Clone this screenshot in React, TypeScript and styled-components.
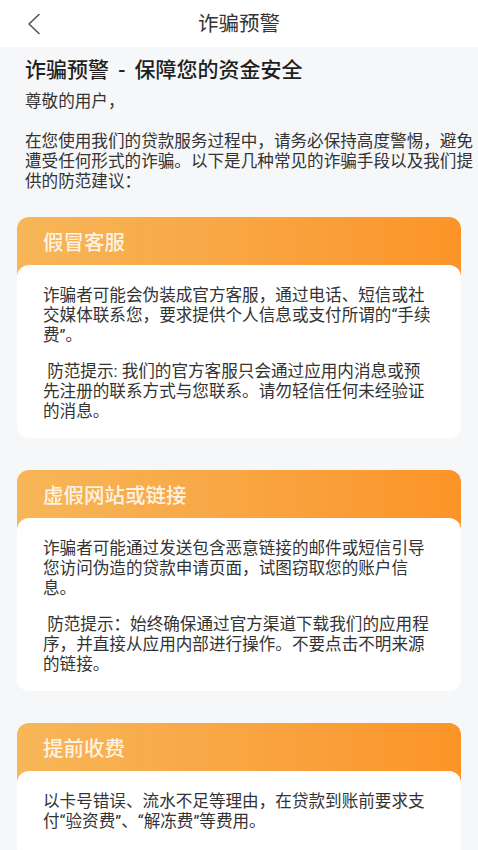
import styled, { createGlobalStyle } from 'styled-components';

const GlobalStyle = createGlobalStyle`
  * {
    box-sizing: border-box;
  }

  body {
    margin: 0;
    background: #f6f7f9;
    font-family: Roboto, 'Noto Sans CJK SC', sans-serif;
    color: #333;
  }
`;

const Page = styled.div`
  min-height: 100vh;
  background: #f6f7f9;
`;

const NavBar = styled.header`
  position: relative;
  height: 47px;
  display: flex;
  align-items: center;
  justify-content: center;
  background: #fff;
`;

const BackButton = styled.button`
  position: absolute;
  left: 20px;
  top: 9px;
  width: 28px;
  height: 30px;
  display: flex;
  align-items: center;
  justify-content: center;
  padding: 0;
  border: none;
  background: none;
  cursor: pointer;
`;

const NavTitle = styled.h1`
  margin: 0;
  font-size: 20.5px;
  font-weight: 400;
  line-height: 28px;
  color: #333;
`;

const Intro = styled.section`
  padding: 8px 3px 0 25px;
`;

const Heading = styled.h2`
  margin: 0;
  font-size: 21px;
  font-weight: 500;
  line-height: 30px;
  word-spacing: 4px;
  color: #1f1f1f;
`;

const Text = styled.p<{ gap?: number }>`
  margin: ${({ gap }) => gap ?? 0}px 0 0;
  font-size: 16.6px;
  line-height: 20px;
  color: #333;
  white-space: pre-wrap;
`;

const CardBody = styled.div`
  position: relative;
  margin-top: -12px;
  background: #fff;
  border-radius: 12px 12px 0 0;
  padding: 21px 28px 16px 26px;
`;

const Card = styled.article`
  border-radius: 12px;
  overflow: hidden;

  &:last-child ${CardBody} {
    padding-bottom: 28px;
  }
`;

const CardList = styled.div`
  display: flex;
  flex-direction: column;
  gap: 32px;
  padding: 25px 17px 24px;
`;

const CardTitle = styled.h3`
  margin: 0;
  height: 60px;
  display: flex;
  align-items: center;
  padding: 0 26px 12px;
  font-size: 20.5px;
  font-weight: 500;
  color: rgba(255, 255, 255, 0.86);
  background: linear-gradient(90deg, #f7b658 0%, #f9a441 55%, #fc9428 100%);
`;

const BackIcon = () => (
  <svg width="14" height="22" viewBox="0 0 14 22" fill="none">
    <path
      d="M12 1.5 L2 11 L12 20.5"
      stroke="#555"
      strokeWidth="1.6"
      strokeLinecap="round"
      strokeLinejoin="round"
    />
  </svg>
);

const cards = [
  {
    title: '假冒客服',
    paragraphs: [
      '诈骗者可能会伪装成官方客服，通过电话、短信或社交媒体联系您，要求提供个人信息或支付所谓的“手续费”。',
      ' 防范提示: 我们的官方客服只会通过应用内消息或预先注册的联系方式与您联系。请勿轻信任何未经验证的消息。',
    ],
  },
  {
    title: '虚假网站或链接',
    paragraphs: [
      '诈骗者可能通过发送包含恶意链接的邮件或短信引导您访问伪造的贷款申请页面，试图窃取您的账户信息。',
      ' 防范提示：始终确保通过官方渠道下载我们的应用程序，并直接从应用内部进行操作。不要点击不明来源的链接。',
    ],
  },
  {
    title: '提前收费',
    paragraphs: ['以卡号错误、流水不足等理由，在贷款到账前要求支付“验资费”、“解冻费”等费用。'],
  },
];

export default function App() {
  return (
    <Page>
      <GlobalStyle />
      <NavBar>
        <BackButton aria-label="返回">
          <BackIcon />
        </BackButton>
        <NavTitle>诈骗预警</NavTitle>
      </NavBar>

      <Intro>
        <Heading>诈骗预警 - 保障您的资金安全</Heading>
        <Text gap={7}>尊敬的用户，</Text>
        <Text gap={20}>
          在您使用我们的贷款服务过程中，请务必保持高度警惕，避免遭受任何形式的诈骗。以下是几种常见的诈骗手段以及我们提供的防范建议：
        </Text>
      </Intro>

      <CardList>
        {cards.map((card) => (
          <Card key={card.title}>
            <CardTitle>{card.title}</CardTitle>
            <CardBody>
              {card.paragraphs.map((p, idx) => (
                <Text key={idx} gap={idx === 0 ? 0 : 16}>
                  {p}
                </Text>
              ))}
            </CardBody>
          </Card>
        ))}
      </CardList>
    </Page>
  );
}
